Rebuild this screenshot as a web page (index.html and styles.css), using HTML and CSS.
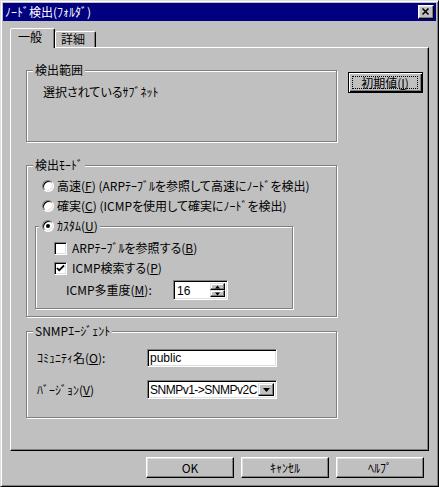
FILE: index.html
```html
<!DOCTYPE html>
<html lang="ja">
<head>
<meta charset="utf-8">
<title>ノード検出</title>
<link rel="stylesheet" href="styles.css">
</head>
<body>
<div class="window">
  <div class="titlebar">
    <span class="title">ﾉｰﾄﾞ検出(ﾌｫﾙﾀﾞ)</span>
    <span class="close"><svg width="14" height="12" viewBox="0 0 14 12"><path d="M3.5 2.5 L9.5 8.5 M9.5 2.5 L3.5 8.5" stroke="#000" stroke-width="1.6" fill="none"/></svg></span>
  </div>
  <div class="body">
    <div class="tabs">
      <div class="tab active">一般</div>
      <div class="tab">詳細</div>
    </div>
    <div class="panel">
      <div class="col">
        <div class="group g1">
          <div class="gtitle">検出範囲</div>
          <div class="scope">選択されているｻﾌﾞﾈｯﾄ</div>
        </div>
        <div class="group g2">
          <div class="gtitle">検出ﾓｰﾄﾞ</div>
          <div class="opt r1"><span class="radio"></span><span>高速(<u>F</u>) (ARPﾃｰﾌﾞﾙを参照して高速にﾉｰﾄﾞを検出)</span></div>
          <div class="opt"><span class="radio"></span><span>確実(<u>C</u>) (ICMPを使用して確実にﾉｰﾄﾞを検出)</span></div>
          <div class="group sub">
            <div class="gtitle stitle"><span class="radio on"></span><span>ｶｽﾀﾑ(<u>U</u>)</span></div>
            <div class="chk c1"><span class="check"></span><span>ARPﾃｰﾌﾞﾙを参照する(<u>B</u>)</span></div>
            <div class="chk"><span class="check"><svg width="11" height="11" viewBox="0 0 11 11"><path d="M2 5 L4.2 7.3 L9 2.5" stroke="#000" stroke-width="1.8" fill="none"/></svg></span><span>ICMP検索する(<u>P</u>)</span></div>
            <div class="mult">
              <span class="mlabel">ICMP多重度(<u>M</u>):</span>
              <div class="spin">
                <span class="spinval">16</span>
                <span class="updown">
                  <span class="ud"><svg width="7" height="4" viewBox="0 0 7 4"><path d="M3.5 0.5 L6 3.5 L1 3.5 Z" fill="#000"/></svg></span>
                  <span class="ud"><svg width="7" height="4" viewBox="0 0 7 4"><path d="M1 0.5 L6 0.5 L3.5 3.5 Z" fill="#000"/></svg></span>
                </span>
              </div>
            </div>
          </div>
        </div>
        <div class="group g3">
          <div class="gtitle">SNMPｴｰｼﾞｪﾝﾄ</div>
          <div class="field f1"><span class="flabel">ｺﾐｭﾆﾃｨ名(<u>O</u>):</span><span class="edit">public</span></div>
          <div class="field f2"><span class="flabel">ﾊﾞｰｼﾞｮﾝ(<u>V</u>)</span><span class="edit combo"><span class="ctext">SNMPv1-&gt;SNMPv2C</span><span class="drop"><svg width="7" height="4" viewBox="0 0 7 4"><path d="M0 0 L7 0 L3.5 4 Z" fill="#000"/></svg></span></span></div>
        </div>
      </div>
      <div class="side">
        <div class="btn default"><span class="focus">初期値(<u>I</u>)</span></div>
      </div>
    </div>
    <div class="buttons">
      <div class="btn">OK</div>
      <div class="btn">ｷｬﾝｾﾙ</div>
      <div class="btn">ﾍﾙﾌﾟ</div>
    </div>
  </div>
</div>
</body>
</html>
```
FILE: styles.css
```css
* { box-sizing: border-box; }
html, body { margin: 0; padding: 0; }
body {
  width: 439px;
  height: 487px;
  overflow: hidden;
  background: #c0c0c0;
  font-family: "Noto Sans CJK JP", sans-serif;
  font-size: 12px;
  font-feature-settings: "palt";
  color: #000;
}
u { text-decoration: underline; text-underline-offset: 1px; }

.window {
  width: 439px;
  height: 487px;
  background: #c0c0c0;
  border: 1px solid;
  border-color: #dfdfdf #000 #000 #dfdfdf;
  box-shadow: inset 1px 1px 0 #fff, inset -1px -1px 0 #808080;
  padding: 2px;
  display: flex;
  flex-direction: column;
}

.titlebar {
  height: 18px;
  flex: none;
  background: #000080;
  color: #fff;
  display: flex;
  align-items: center;
  justify-content: space-between;
  padding: 0 2px 0 2px;
  line-height: 14px;
}
.close {
  width: 16px;
  height: 14px;
  background: #c0c0c0;
  border: 1px solid;
  border-color: #fff #000 #000 #fff;
  box-shadow: inset -1px -1px 0 #808080, inset 1px 1px 0 #dfdfdf;
  display: flex;
  align-items: center;
  justify-content: center;
}
.close svg { display: block; }

.body {
  flex: 1;
  padding: 7px 7px 0 7px;
  display: flex;
  flex-direction: column;
}

.tabs {
  display: flex;
  align-items: flex-end;
  height: 20px;
  margin-bottom: -1px;
  position: relative;
  z-index: 1;
}
.tab {
  width: 41px;
  height: 16px;
  margin-bottom: 1px;
  border: 1px solid;
  border-bottom: none;
  border-color: #fff #000 transparent #fff;
  border-radius: 2px 2px 0 0;
  box-shadow: inset -1px 0 0 #808080;
  background: #c0c0c0;
  padding: 0 0 0 5px;
  line-height: 14px;
}
.tab.active {
  width: 45px;
  height: 20px;
  margin-bottom: 0;
  padding: 1px 0 0 7px;
}

.panel {
  width: 419px;
  height: 404px;
  flex: none;
  border: 1px solid;
  border-color: #fff #000 #000 #fff;
  box-shadow: inset -1px -1px 0 #808080;
  display: flex;
  align-items: flex-start;
  padding: 22px 0 0 15px;
}

.col { width: 311px; flex: none; }

.group {
  border: 1px solid #808080;
  box-shadow: inset 1px 1px 0 #fff, 1px 1px 0 #fff;
}
.gtitle {
  margin: -8px 0 0 6px;
  padding: 0 2px;
  background: #c0c0c0;
  width: fit-content;
  height: 14px;
  line-height: 14px;
}

.g1 { height: 72px; }
.scope { margin: 8px 0 0 16px; line-height: 14px; }

.g2 { margin-top: 23px; height: 152px; }
.opt {
  display: flex;
  align-items: center;
  height: 20px;
  margin-left: 15px;
  line-height: 14px;
  white-space: nowrap;
}
.r1 { margin-top: 4px; }

.radio {
  width: 12px;
  height: 12px;
  flex: none;
  border-radius: 50%;
  background: #fff;
  border: 1px solid;
  border-color: #808080 #fff #fff #808080;
  box-shadow: inset 1px 1px 0 #000, inset -1px -1px 0 #dfdfdf;
  margin-right: 3px;
  display: flex;
  align-items: center;
  justify-content: center;
}
.radio.on::after {
  content: "";
  width: 4px;
  height: 4px;
  border-radius: 50%;
  background: #000;
}

.sub { margin: 10px 0 0 8px; width: 258px; height: 83px; }
.stitle {
  margin: -11px 0 0 3px;
  padding: 0 2px 0 3px;
  height: 20px;
  display: flex;
  align-items: center;
}

.chk {
  display: flex;
  align-items: center;
  height: 20px;
  margin-left: 18px;
  line-height: 14px;
  white-space: nowrap;
}
.c1 { margin-top: 2px; }
.check {
  width: 13px;
  height: 13px;
  flex: none;
  background: #fff;
  border: 1px solid;
  border-color: #808080 #fff #fff #808080;
  box-shadow: inset 1px 1px 0 #000, inset -1px -1px 0 #dfdfdf;
  margin-right: 5px;
  display: flex;
  align-items: center;
  justify-content: center;
}
.check svg { display: block; }

.mult {
  display: flex;
  align-items: center;
  height: 20px;
  margin: 2px 0 0 30px;
  line-height: 14px;
}
.mlabel { width: 107px; flex: none; white-space: nowrap; }
.spin {
  width: 55px;
  height: 20px;
  background: #fff;
  border: 1px solid;
  border-color: #808080 #fff #fff #808080;
  box-shadow: inset 1px 1px 0 #000, inset -1px -1px 0 #dfdfdf;
  display: flex;
  align-items: stretch;
  padding: 2px;
}
.spinval {
  flex: 1;
  font-family: "Liberation Sans", sans-serif;
  line-height: 16px;
  padding-left: 1px;
}
.updown {
  width: 15px;
  display: flex;
  flex-direction: column;
  background: #c0c0c0;
}
.ud {
  flex: 1;
  border: 1px solid;
  border-color: #dfdfdf #000 #000 #dfdfdf;
  box-shadow: inset -1px -1px 0 #808080, inset 1px 1px 0 #fff;
  display: flex;
  align-items: center;
  justify-content: center;
}
.ud svg { display: block; }

.g3 { margin-top: 14px; height: 87px; }
.field {
  display: flex;
  align-items: center;
  margin-left: 10px;
  line-height: 14px;
}
.f1 { margin-top: 11px; }
.f2 { margin-top: 13px; }
.flabel { width: 110px; flex: none; white-space: nowrap; }
.edit {
  width: 130px;
  height: 18px;
  background: #fff;
  border: 1px solid;
  border-color: #808080 #fff #fff #808080;
  box-shadow: inset 1px 1px 0 #000, inset -1px -1px 0 #dfdfdf;
  font-family: "Liberation Sans", sans-serif;
  line-height: 14px;
  padding: 1px 2px;
  white-space: nowrap;
}
.combo {
  height: 19px;
  display: flex;
  align-items: stretch;
  padding: 2px 2px 2px 2px;
}
.ctext {
  flex: 1;
  min-width: 0;
  line-height: 15px;
  white-space: nowrap;
  letter-spacing: -0.5px;
}
.drop {
  width: 16px;
  flex: none;
  background: #c0c0c0;
  border: 1px solid;
  border-color: #dfdfdf #000 #000 #dfdfdf;
  box-shadow: inset -1px -1px 0 #808080, inset 1px 1px 0 #fff;
  display: flex;
  align-items: center;
  justify-content: center;
}
.drop svg { display: block; }

.side { margin: 2px 0 0 11px; }

.btn {
  height: 21px;
  background: #c0c0c0;
  border: 1px solid;
  border-color: #fff #000 #000 #fff;
  box-shadow: inset -1px -1px 0 #808080, inset 1px 1px 0 #dfdfdf;
  display: flex;
  align-items: center;
  justify-content: center;
  line-height: 14px;
  white-space: nowrap;
}
.btn.default {
  width: 75px;
  border-color: #000;
  box-shadow: inset 1px 1px 0 #fff, inset -1px -1px 0 #000, inset -2px -2px 0 #808080;
  padding: 2px;
}
.focus {
  flex: 1;
  align-self: stretch;
  margin: 1px 2px 1px 1px;
  border: 1px dotted #000;
  display: flex;
  align-items: center;
  justify-content: center;
}

.buttons {
  display: flex;
  justify-content: flex-end;
  gap: 7px;
  margin-top: 6px;
  padding-right: 5px;
}
.buttons .btn { width: 88px; }
```
